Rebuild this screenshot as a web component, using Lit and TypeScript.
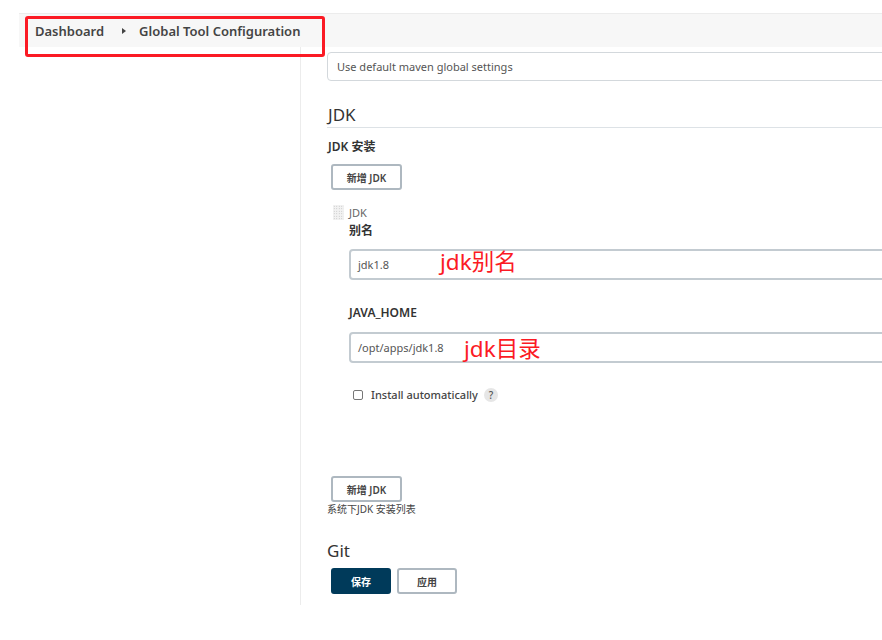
import { LitElement, html, css } from "lit";
import { customElement } from "lit/decorators.js";

@customElement("app-root")
export class AppRoot extends LitElement {
  static styles = css`
    :host {
      display: block;
      position: relative;
      width: 882px;
      height: 640px;
      overflow: hidden;
      background: #fff;
      color: #333;
      font-family: "Noto Sans", "Noto Sans CJK SC", sans-serif;
      font-size: 12px;
    }
    .shell {
      padding: 13px 0 0 19px;
    }
    .crumbs {
      display: flex;
      align-items: center;
      height: 33px;
      padding-left: 16px;
      background: #f7f7f7;
      border-top: 1px solid #ececec;
      font-size: 13px;
      font-weight: 600;
      color: #444;
    }
    .arrow {
      width: 0;
      height: 0;
      margin: 0 13px 0 18px;
      border-left: 4px solid #444;
      border-top: 3px solid transparent;
      border-bottom: 3px solid transparent;
    }
    .body {
      display: flex;
      height: 558px;
    }
    .side {
      flex: none;
      width: 281px;
      border-right: 1px solid #ececec;
    }
    .main {
      flex: 1;
      min-width: 0;
      padding: 5px 0 0 26px;
      overflow: hidden;
    }
    .select,
    .input {
      display: flex;
      align-items: center;
      box-sizing: border-box;
      margin-right: -20px;
      border-radius: 4px;
      color: #555;
    }
    .select {
      height: 29px;
      padding-left: 9px;
      border: 1px solid #d3d8dc;
      font-size: 11px;
    }
    h2 {
      margin: 0;
      font-size: 17px;
      font-weight: 400;
      line-height: 24px;
      color: #333;
    }
    .jdk-head {
      height: 24px;
      margin-top: 22px;
      padding-left: 1px;
      border-bottom: 1px solid #dde2e6;
    }
    .label {
      font-size: 12px;
      font-weight: 600;
      line-height: 16px;
      color: #333;
    }
    .install {
      margin-top: 11px;
      padding-left: 1px;
    }
    .btn {
      display: flex;
      align-items: center;
      justify-content: center;
      box-sizing: border-box;
      width: 71px;
      height: 26px;
      margin-left: 4px;
      border: 2px solid #aeb8c0;
      border-radius: 3px;
      background: #fff;
      font-size: 10px;
      font-weight: 600;
      color: #444;
    }
    .add {
      margin-top: 9px;
    }
    .block {
      display: flex;
      margin-top: 15px;
      margin-left: 6px;
    }
    .handle {
      flex: none;
      width: 11px;
      height: 15px;
      margin-right: 5px;
      background-image: radial-gradient(#bbb 0.7px, transparent 0.8px);
      background-size: 2.5px 2.5px;
      background-color: #f2f2f2;
    }
    .form {
      flex: 1;
      min-width: 0;
    }
    .name {
      font-size: 11px;
      line-height: 15px;
      color: #666;
    }
    .alias {
      margin-top: 3px;
    }
    .input {
      height: 31px;
      margin-top: 10px;
      padding-left: 7px;
      border: 2px solid #c3cbd1;
      font-size: 11px;
    }
    .java {
      margin-top: 25px;
    }
    .java + .input {
      margin-top: 11px;
    }
    .check {
      display: flex;
      align-items: center;
      margin: 24px 0 0 4px;
      font-size: 11px;
      font-weight: 500;
      color: #444;
    }
    .box {
      box-sizing: border-box;
      width: 10px;
      height: 10px;
      margin-right: 8px;
      border: 1px solid #777;
      border-radius: 2px;
    }
    .help {
      display: flex;
      align-items: center;
      justify-content: center;
      width: 14px;
      height: 14px;
      margin-left: 6px;
      border-radius: 50%;
      background: #e6e6e6;
      font-size: 10px;
      color: #555;
    }
    .add-2 {
      margin-top: 74px;
    }
    .hint {
      font-size: 10px;
      line-height: 14px;
      color: #444;
    }
    .git {
      margin-top: 23px;
    }
    .actions {
      display: flex;
      gap: 6px;
      margin-top: 5px;
    }
    .actions .btn {
      width: 60px;
    }
    .actions .btn + .btn {
      margin-left: 0;
    }
    .actions .primary {
      background: #003a5a;
      border-color: #003a5a;
      color: #fff;
    }
    .mark {
      position: absolute;
      box-sizing: border-box;
      left: 25px;
      top: 16px;
      width: 300px;
      height: 41px;
      border: 3px solid #fb1a24;
      border-radius: 3px;
    }
    .note {
      position: absolute;
      font-size: 22.5px;
      line-height: 30px;
      color: #fb1a24;
    }
    .note-name {
      left: 440px;
      top: 247px;
    }
    .note-home {
      left: 464px;
      top: 334px;
    }
  `;

  render() {
    return html`
      <div class="shell">
        <div class="crumbs">
          <span>Dashboard</span>
          <span class="arrow"></span>
          <span>Global Tool Configuration</span>
        </div>
        <div class="body">
          <div class="side"></div>
          <div class="main">
            <div class="select">Use default maven global settings</div>
            <h2 class="jdk-head">JDK</h2>
            <div class="label install">JDK 安装</div>
            <div class="btn add">新增 JDK</div>
            <div class="block">
              <div class="handle"></div>
              <div class="form">
                <div class="name">JDK</div>
                <div class="label alias">别名</div>
                <div class="input">jdk1.8</div>
                <div class="label java">JAVA_HOME</div>
                <div class="input">/opt/apps/jdk1.8</div>
                <div class="check">
                  <span class="box"></span>
                  <span>Install automatically</span>
                  <span class="help">?</span>
                </div>
              </div>
            </div>
            <div class="btn add-2">新增 JDK</div>
            <div class="hint">系统下JDK 安装列表</div>
            <h2 class="git">Git</h2>
            <div class="actions">
              <div class="btn primary">保存</div>
              <div class="btn">应用</div>
            </div>
          </div>
        </div>
      </div>
      <div class="mark"></div>
      <div class="note note-name">jdk别名</div>
      <div class="note note-home">jdk目录</div>
    `;
  }
}
